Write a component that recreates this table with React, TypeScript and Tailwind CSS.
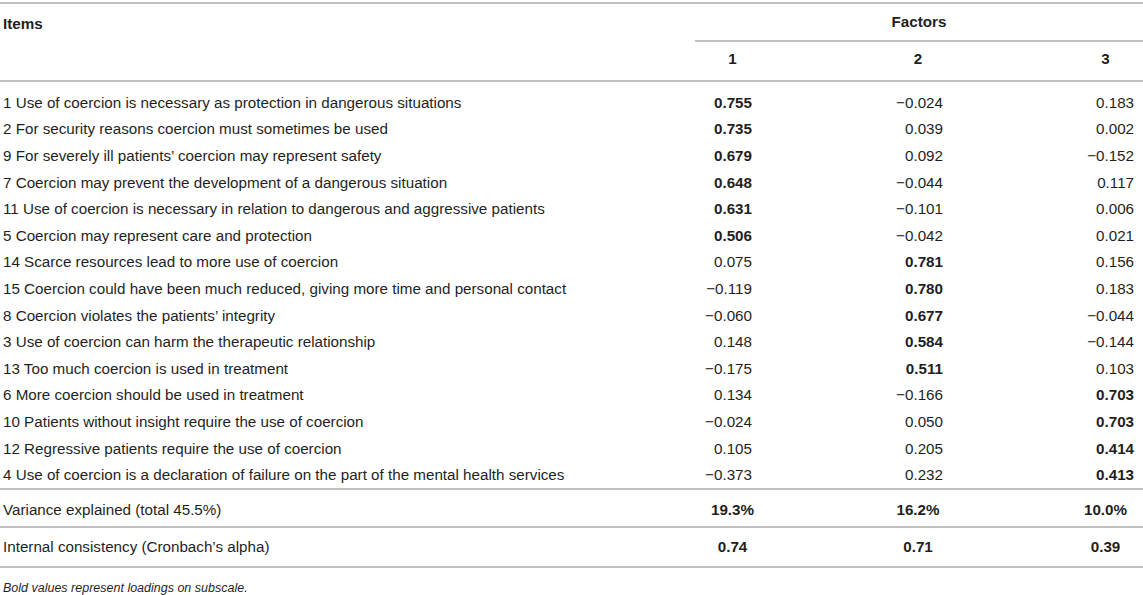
import React from 'react';

type Row = {
  label: string;
  values: [string, string, string];
  bold: number;
};

const rows: Row[] = [
  { label: '1 Use of coercion is necessary as protection in dangerous situations', values: ['0.755', '−0.024', '0.183'], bold: 0 },
  { label: '2 For security reasons coercion must sometimes be used', values: ['0.735', '0.039', '0.002'], bold: 0 },
  { label: '9 For severely ill patients’ coercion may represent safety', values: ['0.679', '0.092', '−0.152'], bold: 0 },
  { label: '7 Coercion may prevent the development of a dangerous situation', values: ['0.648', '−0.044', '0.117'], bold: 0 },
  { label: '11 Use of coercion is necessary in relation to dangerous and aggressive patients', values: ['0.631', '−0.101', '0.006'], bold: 0 },
  { label: '5 Coercion may represent care and protection', values: ['0.506', '−0.042', '0.021'], bold: 0 },
  { label: '14 Scarce resources lead to more use of coercion', values: ['0.075', '0.781', '0.156'], bold: 1 },
  { label: '15 Coercion could have been much reduced, giving more time and personal contact', values: ['−0.119', '0.780', '0.183'], bold: 1 },
  { label: '8 Coercion violates the patients’ integrity', values: ['−0.060', '0.677', '−0.044'], bold: 1 },
  { label: '3 Use of coercion can harm the therapeutic relationship', values: ['0.148', '0.584', '−0.144'], bold: 1 },
  { label: '13 Too much coercion is used in treatment', values: ['−0.175', '0.511', '0.103'], bold: 1 },
  { label: '6 More coercion should be used in treatment', values: ['0.134', '−0.166', '0.703'], bold: 2 },
  { label: '10 Patients without insight require the use of coercion', values: ['−0.024', '0.050', '0.703'], bold: 2 },
  { label: '12 Regressive patients require the use of coercion', values: ['0.105', '0.205', '0.414'], bold: 2 },
  { label: '4 Use of coercion is a declaration of failure on the part of the mental health services', values: ['−0.373', '0.232', '0.413'], bold: 2 },
];

// values are right aligned inside each factor column, headers and totals are centred
const valuePad = ['pr-[18px]', 'pr-[123px]', 'pr-[9px]'];

export default function App() {
  return (
    <div
      className="w-[1143px] h-[595px] bg-white text-[#1f1f1f] text-[15.2px] overflow-hidden"
      style={{ fontFamily: '"Liberation Sans", Arial, Helvetica, sans-serif' }}
    >
      <div className="pt-[2px]">
        <table className="w-full border-collapse table-fixed">
          <colgroup>
            <col className="w-[695px]" />
            <col className="w-[75px]" />
            <col className="w-[296px]" />
            <col className="w-[77px]" />
          </colgroup>
          <thead>
            <tr className="border-t-2 border-[#c2c2c2]">
              <th rowSpan={2} className="align-top text-left font-bold pl-[3px] pt-[9px]">
                Items
              </th>
              <th colSpan={3} className="h-[38px] text-center font-bold border-b-2 border-[#c2c2c2]">
                Factors
              </th>
            </tr>
            <tr className="border-b-2 border-[#c2c2c2]">
              <th className="h-[40px] pb-[4px] text-center font-bold">1</th>
              <th className="h-[40px] pb-[4px] text-center font-bold">2</th>
              <th className="h-[40px] pb-[4px] text-center font-bold pl-[2px]">3</th>
            </tr>
          </thead>
          <tbody>
            <tr>
              <td colSpan={4} className="h-[9px] p-0" />
            </tr>
            {rows.map((row, r) => (
              <tr key={r} className="h-[26.6px]">
                <td className="pl-[3px] whitespace-nowrap">{row.label}</td>
                {row.values.map((v, i) => (
                  <td
                    key={i}
                    className={`text-right ${valuePad[i]} ${row.bold === i ? 'font-bold' : ''}`}
                  >
                    {v}
                  </td>
                ))}
              </tr>
            ))}
            <tr className="border-t-2 border-[#c2c2c2]">
              <td className="h-[38px] pt-[5px] pl-[3px]">Variance explained (total 45.5%)</td>
              <td className="pt-[5px] text-center font-bold">19.3%</td>
              <td className="pt-[5px] text-center font-bold">16.2%</td>
              <td className="pt-[5px] text-center font-bold pl-[2px]">10.0%</td>
            </tr>
            <tr className="border-t-2 border-b-2 border-[#c2c2c2]">
              <td className="h-[40px] pl-[3px]">Internal consistency (Cronbach’s alpha)</td>
              <td className="text-center font-bold">0.74</td>
              <td className="text-center font-bold">0.71</td>
              <td className="text-center font-bold pl-[2px]">0.39</td>
            </tr>
          </tbody>
        </table>
        <p className="pl-[3px] pt-[11px] text-[12.5px] italic">
          Bold values represent loadings on subscale.
        </p>
      </div>
    </div>
  );
}
